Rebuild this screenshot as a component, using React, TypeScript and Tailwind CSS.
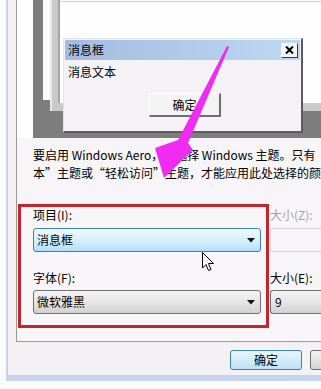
import React from "react";

const Caret = () => (
  <svg width="8" height="5" viewBox="0 0 8 5" className="shrink-0">
    <path d="M0 0 L8 0 L4 4.5 Z" fill="#111" />
  </svg>
);

export default function App() {
  return (
    <div className="relative w-[321px] h-[389px] overflow-hidden bg-[#fbfbfb] font-['Noto_Sans_CJK_SC','Noto_Sans',sans-serif] text-[12px] leading-[18px] text-black">
      <div className="flex h-full">
        <div className="shrink-0 w-[6px] bg-[#fbfbfb]" />
        <div className="shrink-0 w-[2px] h-[381px] bg-[#c3d3e8]" />
        <div className="flex-1 min-w-0 overflow-hidden flex flex-col">
          {/* dialog body */}
          <div className="h-[375px] shrink-0 bg-[#f4f1f4] flex flex-col">
            <div className="ml-[8px] h-[342px] shrink-0 border-l border-b border-[#9a9a9a] bg-[#f8f5f8] flex flex-col">
              {/* preview */}
              <div className="flex h-[138px] shrink-0 bg-[#fdfdfd]">
                <div className="shrink-0 w-[16px]" />
                <div className="relative flex-1 bg-[#7d7d7d] overflow-hidden">
                  {/* inactive window */}
                  <div className="absolute left-[10px] top-[-10px] w-[300px] h-[110px] bg-[#fbfbfb]" />
                  {/* active window */}
                  <div className="absolute left-[17px] top-[-10px] w-[300px] h-[121px] bg-[#c9c9c9] border-l-[2px] border-[#e8e8e8]">
                    <div className="ml-[6px] h-[113px] bg-[#fdfdfd] border-l-2 border-[#a4a4a4]">
                      <div className="h-[12px] border-b border-[#cfcfcf]" />
                    </div>
                  </div>
                  {/* message box */}
                  <div className="absolute left-[30px] top-[38px] w-[240px] h-[95px] bg-[#f5f2f5] border-t border-l border-[#e4e4e4] border-r-2 border-b-2 border-r-[#5c5c5c] border-b-[#5c5c5c] p-[1px]">
                    <div className="h-[20px] flex items-center justify-between pl-[3px] pr-[2px] bg-gradient-to-r from-[#a4bbe0] to-[#bcd9f2]">
                      <span>消息框</span>
                      <div className="w-[17px] h-[15px] bg-[#f6f6f6] border-t border-l border-white border-r border-b border-r-[#3a3a3a] border-b-[#3a3a3a] flex items-center justify-center">
                        <svg width="9" height="8" viewBox="0 0 9 8">
                          <path d="M1 0.5 L8 7.5 M8 0.5 L1 7.5" stroke="#000" strokeWidth="2" />
                        </svg>
                      </div>
                    </div>
                    <div className="pl-[3px] pt-[3px]">消息文本</div>
                    <div className="ml-[84px] mt-[12px] w-[72px] h-[24px] bg-[#f3f3f3] border-t border-l border-[#fefefe] border-r-2 border-b-2 border-r-[#6e6e6e] border-b-[#6e6e6e] flex items-center justify-center">
                      确定
                    </div>
                  </div>
                </div>
              </div>
              {/* description */}
              <div className="pl-[16px] mt-[8px] whitespace-nowrap">
                <div>要启用 Windows Aero，请选择 Windows 主题。只有“Windows 7 基</div>
                <div>本”主题或“轻松访问”主题，才能应用此处选择的颜色和大小。</div>
              </div>
              {/* controls */}
              <div className="flex mt-[22px]">
                <div className="shrink-0 ml-[1px] w-[251px] h-[124px] border-[3px] border-[#c4252b] pl-[12px] pr-[5px] flex flex-col">
                  <div className="h-[18px] mt-[-1px]">项目(I):</div>
                  <div className="mt-[4px] h-[24px] rounded-[3px] border border-[#3c7fb1] bg-gradient-to-b from-[#eef8fe] via-[#d9f0fc] to-[#b4defa] flex items-center justify-between pl-[3px] pr-[5px]">
                    <span>消息框</span>
                    <Caret />
                  </div>
                  <div className="mt-[17px] h-[18px]">字体(F):</div>
                  <div className="mt-[3px] h-[24px] rounded-[3px] border border-[#707070] bg-gradient-to-b from-[#f3f3f3] via-[#e6e6e6] to-[#d2d2d2] flex items-center justify-between pl-[3px] pr-[5px]">
                    <span>微软雅黑</span>
                    <Caret />
                  </div>
                </div>
                <div className="flex-1 min-w-0 pl-[1px] flex flex-col">
                  <div className="h-[18px] mt-[2px] text-[#a3a3a3] whitespace-nowrap">大小(Z):</div>
                  <div className="mt-[4px] h-[24px] border border-[#d4d4d4] border-r-0 mr-[-20px]" />
                  <div className="mt-[17px] h-[18px] whitespace-nowrap">大小(E):</div>
                  <div className="mt-[3px] h-[24px] rounded-l-[3px] border border-[#707070] border-r-0 bg-gradient-to-b from-[#f3f3f3] via-[#e6e6e6] to-[#d2d2d2] flex items-center pl-[4px]">
                    9
                  </div>
                </div>
              </div>
            </div>
            {/* buttons */}
            <div className="flex gap-[8px] ml-[222px] mt-[8px]">
              <div className="shrink-0 w-[72px] h-[20px] rounded-[3px] border border-[#3c7fb1] bg-gradient-to-b from-[#e8f5fc] to-[#bfe2f5] flex items-center justify-center leading-none">
                确定
              </div>
              <div className="shrink-0 w-[72px] h-[20px] rounded-[3px] border border-[#707070] bg-gradient-to-b from-[#f2f2f2] to-[#d4d4d4] flex items-center justify-center leading-none">
                取消
              </div>
            </div>
          </div>
          <div className="h-[6px] shrink-0 bg-[#c4d5ec]" />
          <div className="flex-1 bg-[#fbfbfb]" />
        </div>
      </div>

      {/* magenta annotation arrow */}
      <svg className="absolute left-0 top-0 pointer-events-none" width="321" height="389" viewBox="0 0 321 389">
        <polygon
          points="227,46 229,47 188,143 193,150 164,178 155,148 178,140"
          fill="#f02cf0"
        />
      </svg>

      {/* mouse cursor */}
      <svg className="absolute left-[202px] top-[252px] pointer-events-none" width="13" height="21" viewBox="0 0 13 21">
        <path d="M0.5 0.5 L0.5 16 L4 12.5 L6.5 18.5 L9 17.5 L6.5 11.5 L11.5 11.5 Z" fill="#fff" stroke="#000" strokeWidth="1" />
      </svg>
    </div>
  );
}
